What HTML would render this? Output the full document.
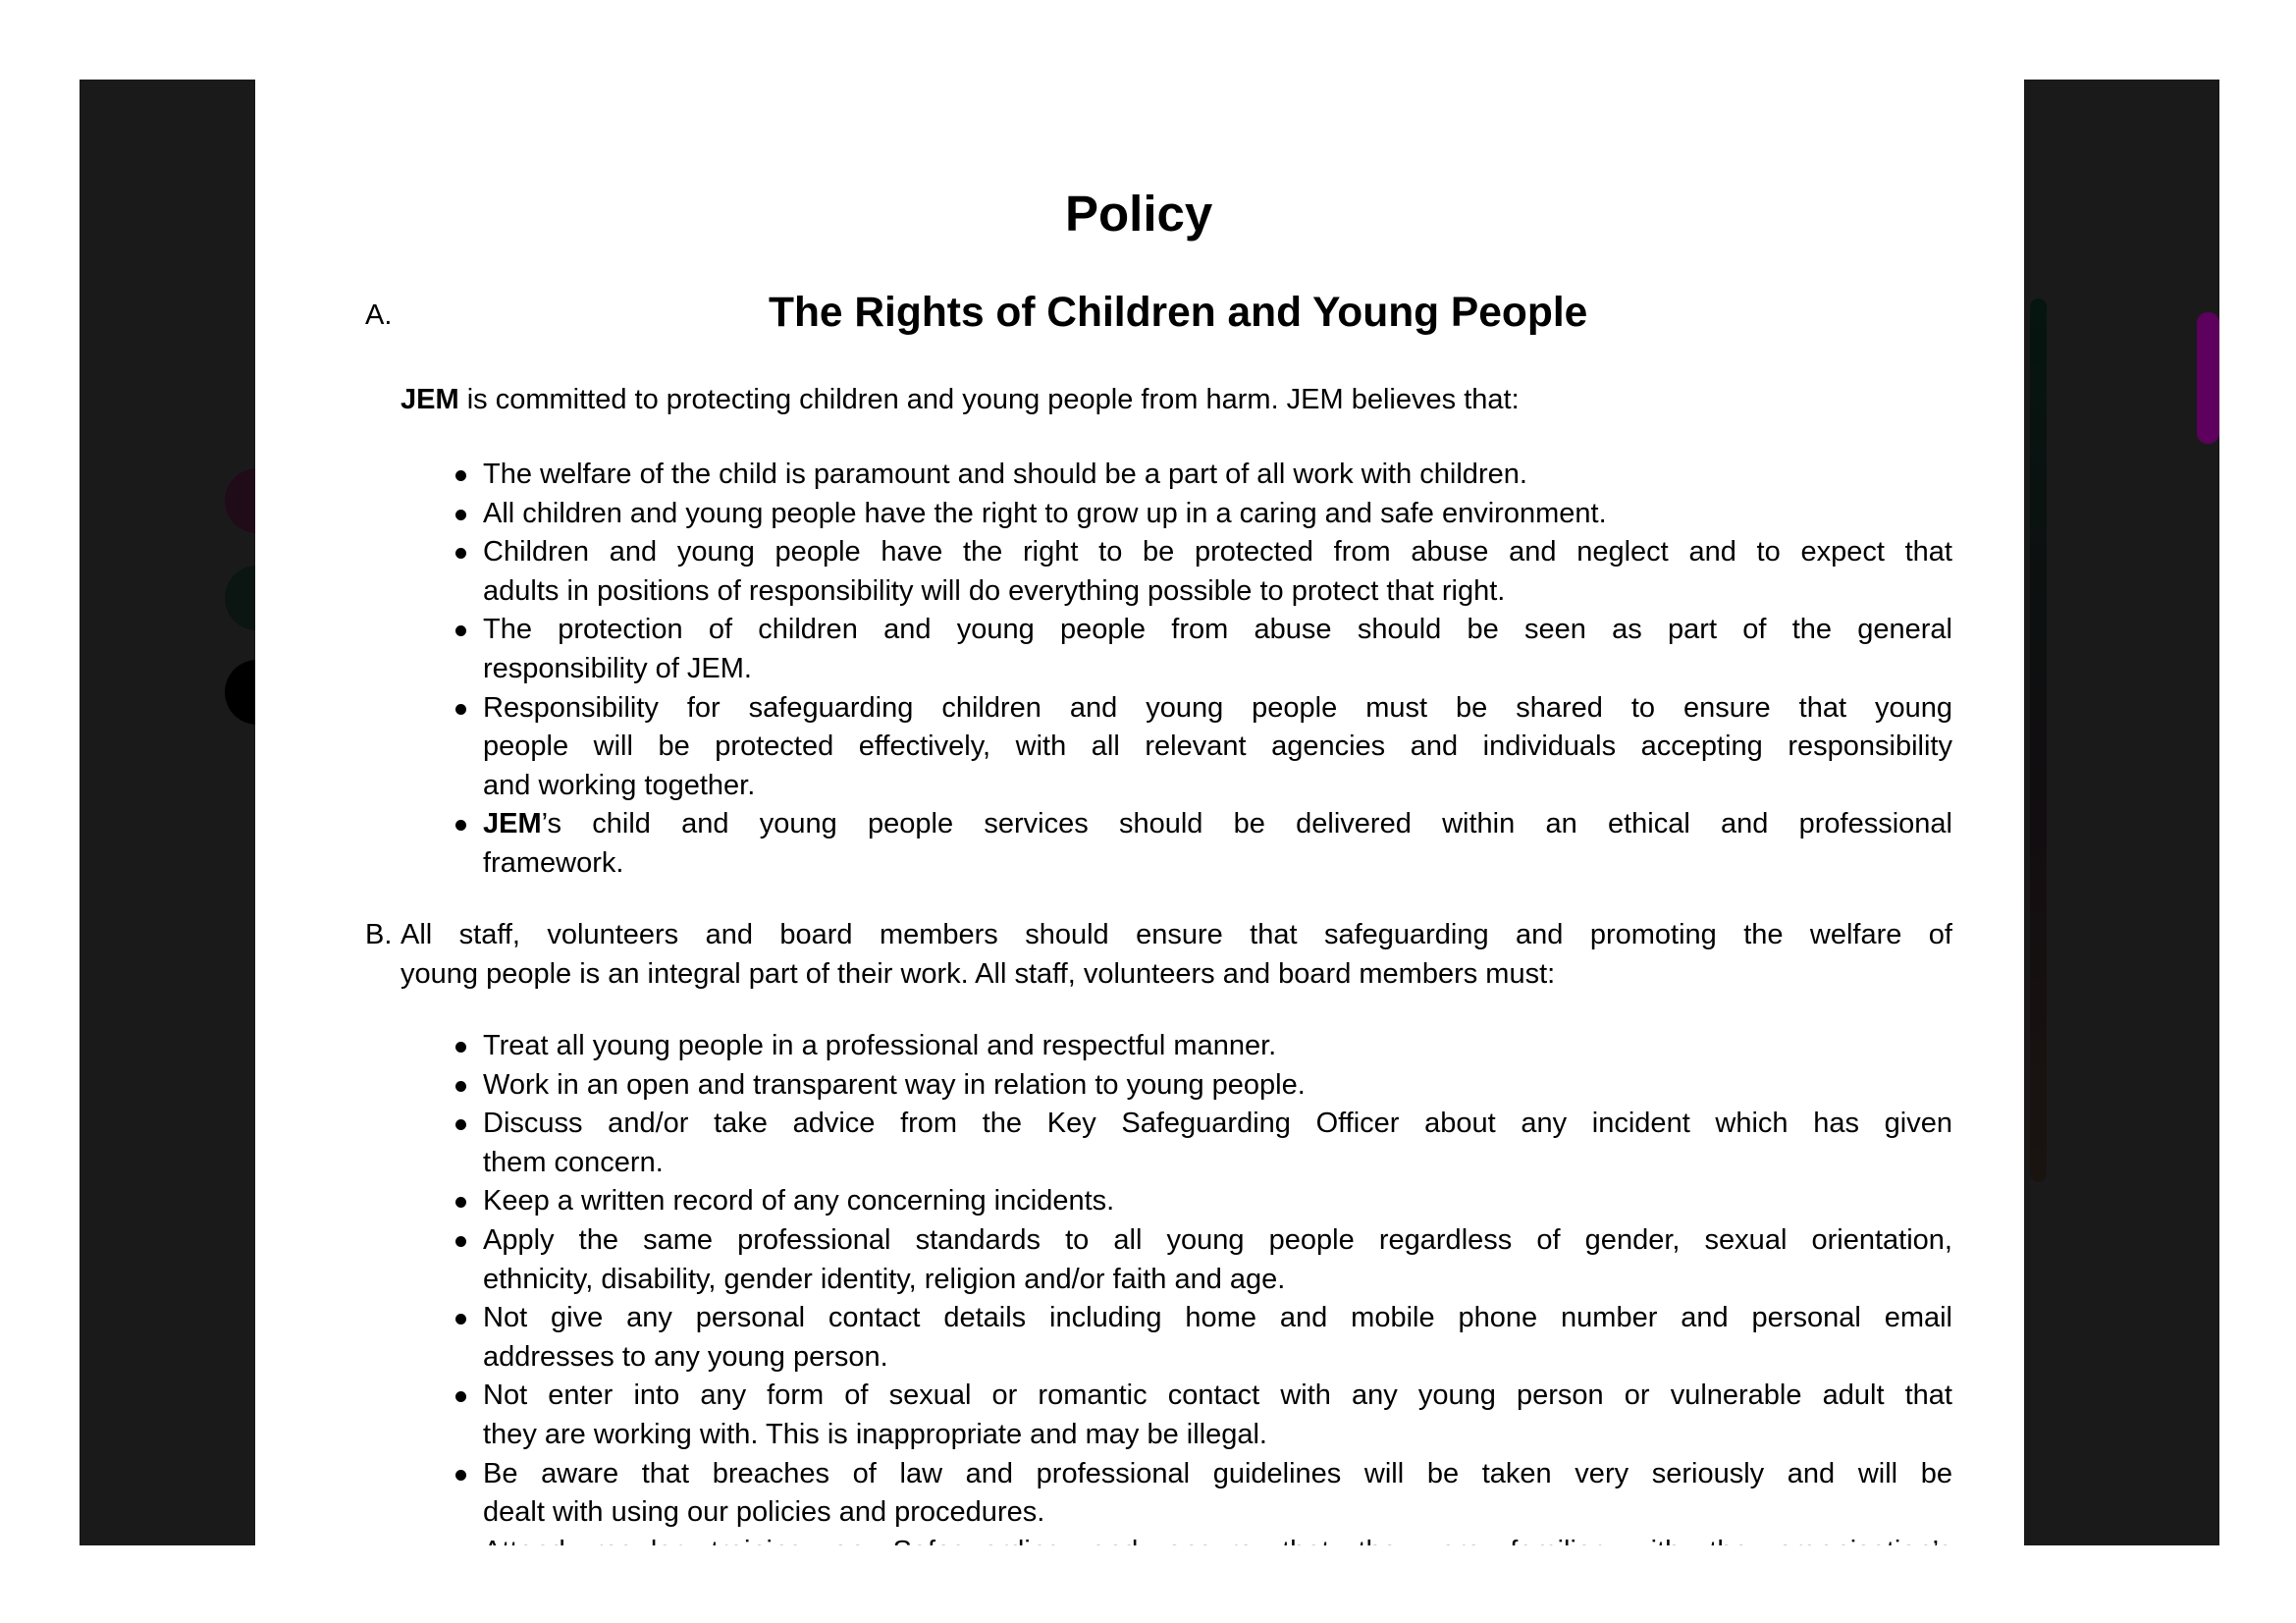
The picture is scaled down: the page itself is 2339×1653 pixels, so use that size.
<!DOCTYPE html>
<html><head><meta charset="utf-8"><style>
html,body{margin:0;padding:0;background:#fff;}
body{width:2339px;height:1653px;position:relative;overflow:hidden;font-family:"Liberation Sans",sans-serif;color:#000;}
.panel{position:absolute;top:81px;height:1493px;background:#1b1a1b;}
.page{position:absolute;left:260px;top:0;width:1802px;height:1574px;background:#fff;overflow:hidden;}
.abs{position:absolute;white-space:nowrap;}
.blk{position:absolute;font-size:29px;line-height:39.6px;}
.l{height:39.6px;white-space:nowrap;position:relative;}
.j{text-align:justify;text-align-last:justify;white-space:normal;}
.bul::before{content:"";position:absolute;left:-28px;top:15px;width:11px;height:11px;border-radius:50%;background:#000;}
</style></head><body>
<div class="panel" style="left:81px;width:179px;"></div>
<div style="position:absolute;left:229px;top:477px;width:66px;height:66px;border-radius:50%;background:#1f0c18"></div>
<div style="position:absolute;left:229px;top:576px;width:66px;height:66px;border-radius:50%;background:#0b1512"></div>
<div style="position:absolute;left:229px;top:672px;width:66px;height:66px;border-radius:50%;background:#000"></div>
<div class="panel" style="left:2062px;width:199px;"></div>
<div style="position:absolute;left:2068px;top:304px;width:17px;height:900px;border-radius:9px;background:linear-gradient(#051510,#120d10 60%,#1a1410)"></div>
<div style="position:absolute;left:2238px;top:318px;width:23px;height:134px;border-radius:11px;background:#5e005e"></div>

<div class="page">
<div class="abs" style="left:825px;top:188px;font-size:51px;font-weight:bold;">Policy</div>
<div class="abs" style="left:112px;top:305px;font-size:29px;">A.</div>
<div class="abs" style="left:523px;top:295px;font-size:42.5px;font-weight:bold;">The Rights of Children and Young People</div>
<div class="abs" style="left:148px;top:391px;font-size:29px;"><b>JEM</b> is committed to protecting children and young people from harm. JEM believes that:</div>

<div class="blk" style="left:232px;top:464px;width:1497px;">
<div class="l bul">The welfare of the child is paramount and should be a part of all work with children.</div>
<div class="l bul">All children and young people have the right to grow up in a caring and safe environment.</div>
<div class="l bul j">Children and young people have the right to be protected from abuse and neglect and to expect that</div>
<div class="l">adults in positions of responsibility will do everything possible to protect that right.</div>
<div class="l bul j">The protection of children and young people from abuse should be seen as part of the general</div>
<div class="l">responsibility of JEM.</div>
<div class="l bul j">Responsibility for safeguarding children and young people must be shared to ensure that young</div>
<div class="l j">people will be protected effectively, with all relevant agencies and individuals accepting responsibility</div>
<div class="l">and working together.</div>
<div class="l bul j"><b>JEM</b>’s child and young people services should be delivered within an ethical and professional</div>
<div class="l">framework.</div>
</div>

<div class="abs" style="left:112px;top:933px;font-size:29px;line-height:39.6px;">B.</div>
<div class="blk" style="left:148px;top:933px;width:1581px;">
<div class="l j">All staff, volunteers and board members should ensure that safeguarding and promoting the welfare of</div>
<div class="l">young people is an integral part of their work. All staff, volunteers and board members must:</div>
</div>

<div class="blk" style="left:232px;top:1046px;width:1497px;">
<div class="l bul">Treat all young people in a professional and respectful manner.</div>
<div class="l bul">Work in an open and transparent way in relation to young people.</div>
<div class="l bul j">Discuss and/or take advice from the Key Safeguarding Officer about any incident which has given</div>
<div class="l">them concern.</div>
<div class="l bul">Keep a written record of any concerning incidents.</div>
<div class="l bul j">Apply the same professional standards to all young people regardless of gender, sexual orientation,</div>
<div class="l">ethnicity, disability, gender identity, religion and/or faith and age.</div>
<div class="l bul j">Not give any personal contact details including home and mobile phone number and personal email</div>
<div class="l">addresses to any young person.</div>
<div class="l bul j">Not enter into any form of sexual or romantic contact with any young person or vulnerable adult that</div>
<div class="l">they are working with. This is inappropriate and may be illegal.</div>
<div class="l bul j">Be aware that breaches of law and professional guidelines will be taken very seriously and will be</div>
<div class="l">dealt with using our policies and procedures.</div>
<div class="l bul j">Attend regular training on Safeguarding and ensure that they are familiar with the organisation’s</div>
</div>
</div>
</body></html>
